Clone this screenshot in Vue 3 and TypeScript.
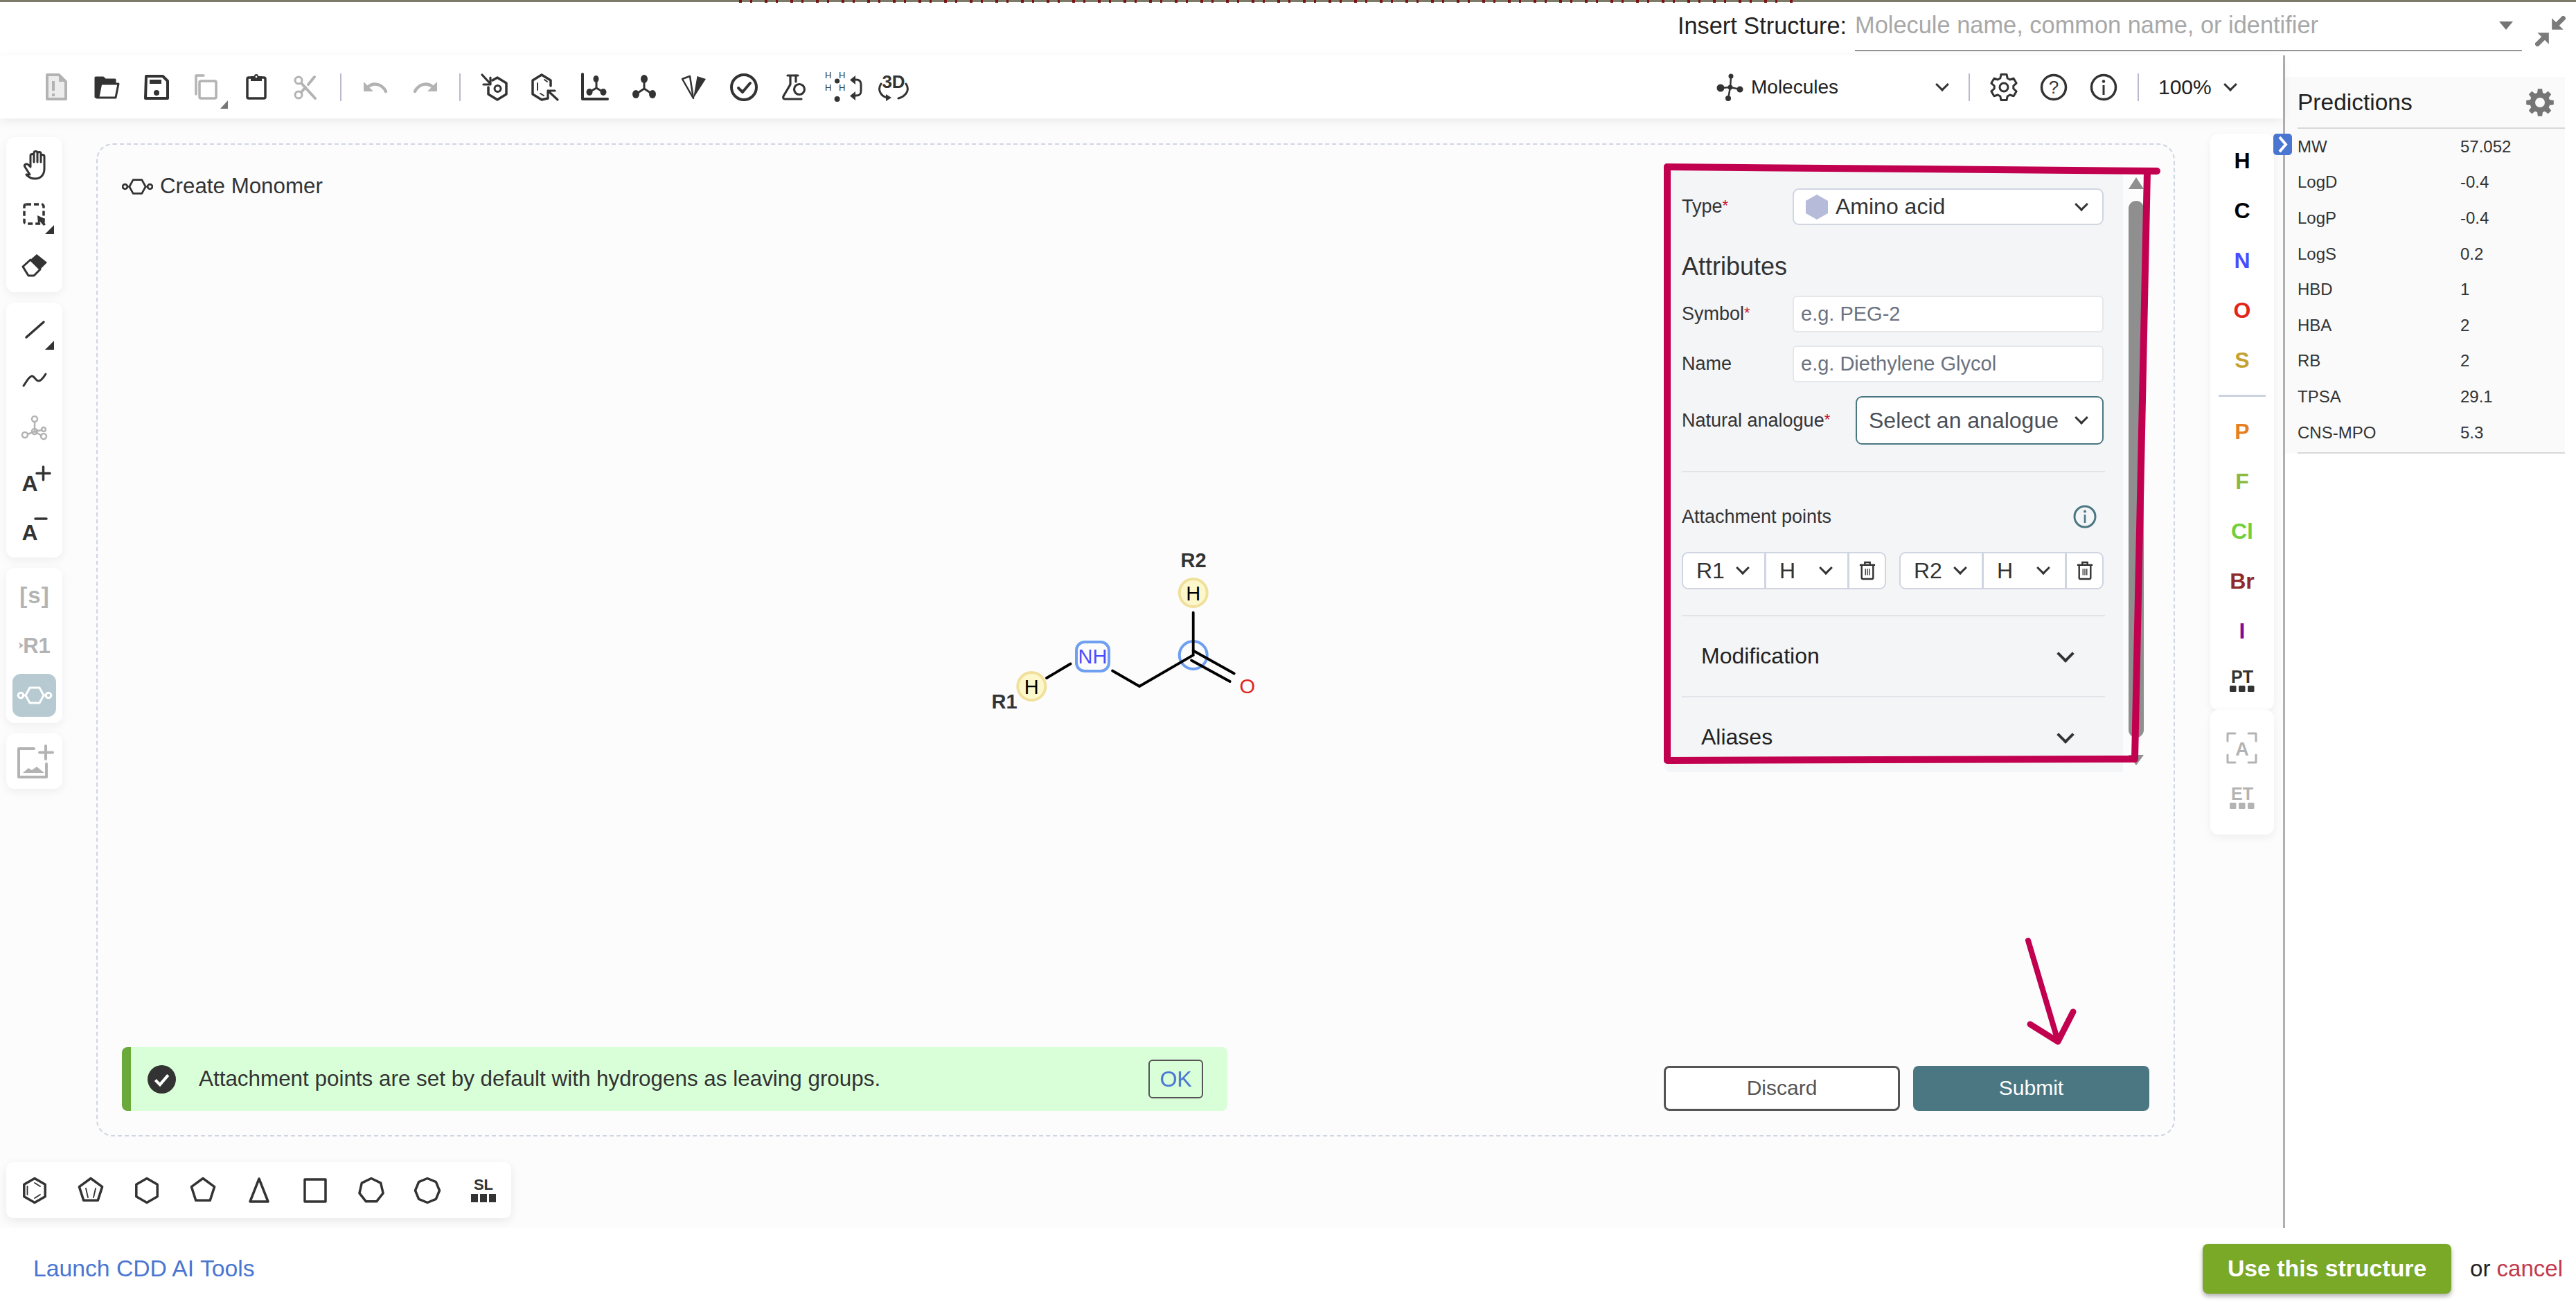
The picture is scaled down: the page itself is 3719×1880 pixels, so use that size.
<script setup lang="ts">
const D = '#333333'
const G = '#b3b3b3'
const F = 'font-family="Liberation Sans, Arial, sans-serif"'

function gear(cx: number, cy: number, R: number, r: number, n: number): string {
  const s = (Math.PI * 2) / n
  const out: string[] = []
  for (let i = 0; i < n; i++) {
    const a = i * s - Math.PI / 2
    const spots: Array<[number, number]> = [
      [r, a - 0.36 * s],
      [R, a - 0.2 * s],
      [R, a + 0.2 * s],
      [r, a + 0.36 * s],
    ]
    for (const [rad, ang] of spots) {
      out.push(`${(cx + rad * Math.cos(ang)).toFixed(1)} ${(cy + rad * Math.sin(ang)).toFixed(1)}`)
    }
  }
  return 'M' + out.join('L') + 'Z'
}

function ngon(n: number, cx = 20, cy = 20, r = 17.5): string {
  const pts: string[] = []
  for (let i = 0; i < n; i++) {
    const a = (i * 2 * Math.PI) / n - Math.PI / 2
    pts.push(`${(cx + r * Math.cos(a)).toFixed(1)},${(cy + r * Math.sin(a)).toFixed(1)}`)
  }
  return pts.join(' ')
}

const line = (c: string, w: number) =>
  `fill="none" stroke="${c}" stroke-width="${w}" stroke-linecap="round" stroke-linejoin="round"`

const fileIcons = [
  `<path d="M6 2h17l10 10v25H6z" fill="#ececec" ${line(G, 4)}/><path d="M23 2v10h10z" fill="${G}"/><rect x="13" y="11" width="4" height="14" fill="${G}"/><rect x="13" y="29" width="4" height="4" fill="${G}"/>`,
  `<path d="M4 6h11l3 3h14v5H12L8 34H4z" fill="${D}" ${`stroke="${D}" stroke-width="3" stroke-linejoin="round"`}/><path d="M11 15h26l-4 20H6z" ${line(D, 3)}/>`,
  `<path d="M5 4h24l7 7v25H4z" ${line(D, 4)}/><rect x="10" y="9" width="17" height="6" fill="${D}"/><circle cx="20" cy="28" r="4" fill="${D}"/>`,
  `<path d="M16 3H5v27" ${line(G, 3.5)}/><rect x="10" y="11" width="24" height="25" rx="2" ${line(G, 3.5)}/><path d="M40 51h11V39z" fill="#777777"/>`,
  `<rect x="7" y="6" width="26" height="30" rx="2" ${line(D, 3.5)}/><path d="M12 4h5a3 3 0 0 1 6 0h5v7H12z" fill="${D}"/><circle cx="20" cy="5" r="1.4" fill="#fff"/>`,
  `<circle cx="9" cy="10" r="5" ${line(G, 3)}/><circle cx="9" cy="31" r="5" ${line(G, 3)}/><path d="M13 14l20 22M13 27l6-7M23 16l9-11" ${line(G, 4)}/>`,
]

const historyIcons = [
  `<path d="M3 12v14h14z" fill="${G}"/><path d="M9 20c7-7 20-6 26 6" ${line(G, 4.5)}/>`,
  `<path d="M37 12v14H23z" fill="${G}"/><path d="M31 20C24 13 11 14 5 26" ${line(G, 4.5)}/>`,
]

const chemIcons = [
  `<path d="M2 2l12 13M4 16h10V6" ${line(D, 3.2)}/><path d="M17 10l7-4 13 8v16l-13 8-13-8V20" ${line(D, 3.5)}/><circle cx="24.5" cy="22" r="4.5" ${line(D, 3)}/>`,
  `<path d="M16 2l13 8v8M25 36l-9 2-13-8V10l13-8" ${line(D, 3.5)}/><path d="M10 14v10M14 29l5 3M20 9l4 3" ${line(D, 2)}/><path d="M39 38L25 25M25 35V25h10" ${line(D, 3.2)}/>`,
  `<path d="M3 1v36h36" ${line(D, 4)}/><path d="M23 8v13L13 27M23 21l10 6" ${line(D, 3)}/><ellipse cx="22.5" cy="8" rx="4" ry="5" fill="${D}"/><ellipse cx="13" cy="27" rx="4.5" ry="5" fill="${D}"/><ellipse cx="33" cy="27" rx="4.5" ry="5" fill="${D}"/>`,
  `<path d="M20 8v14L8 30M20 22l12 8" ${line(D, 3)}/><ellipse cx="20" cy="8" rx="5" ry="6" fill="${D}"/><ellipse cx="8" cy="30" rx="5" ry="6" fill="${D}"/><ellipse cx="32" cy="30" rx="5" ry="6" fill="${D}"/>`,
  `<path d="M3 8l11-4 5 32z" fill="none" stroke="${D}" stroke-width="2.5" stroke-linejoin="round"/><path d="M24.5 4L37 8 19 36z" fill="${D}"/>`,
  `<circle cx="20" cy="20" r="18" ${line(D, 4)}/><path d="M12 21l6 6 11-13" ${line(D, 4)}/>`,
  `<path d="M11 3h15M15 3v13L5 33c-1 2 0 4 2 4h24" ${line(D, 3.2)}/><path d="M23 3v9" ${line(D, 3.2)}/><circle cx="28" cy="23" r="7.5" ${line(D, 3.2)}/>`,
  `<g ${F} font-size="13" fill="${D}"><text x="-7" y="7">H</text><text x="13" y="7">H</text><text x="-7" y="25">H</text><text x="13" y="25">H</text></g><circle cx="10.6" cy="11" r="3.6" fill="${D}"/><circle cx="10.6" cy="37" r="4" fill="${D}"/><path d="M34 9h4c5 0 7 3 7 7v9c0 5-2 7-7 7h-4" ${line(D, 3)}/><path d="M37 3v13l-8-6.500z" fill="${D}"/><path d="M37 26v13l-8-6.500z" fill="${D}"/>`,
  `<text x="20" y="21" text-anchor="middle" ${F} font-weight="700" font-size="26" fill="${D}">3D</text><path d="M2 15C-4 24 2 33 11 35M38 15c6 9 0 18-11 21" ${line(D, 3)}/><path d="M9 30l8 5-8 5z" fill="${D}"/>`,
]

const molIcon = `<path d="M21 20L22 5M21 20L7 21M21 20l14 3M21 20l-3 16" ${line(D, 2.5)}/><circle cx="22" cy="4" r="3.5" fill="${D}"/><circle cx="7" cy="21" r="5.500" fill="${D}"/><circle cx="21" cy="20" r="3.500" fill="${D}"/><circle cx="35" cy="23" r="4.500" fill="${D}"/><circle cx="18" cy="36" r="4" fill="${D}"/>`

const sysIcons = [
  `<path d="${gear(20, 20, 19, 14, 6)}" ${line(D, 3)}/><circle cx="20" cy="20" r="6" ${line(D, 3)}/>`,
  `<circle cx="20" cy="20" r="17.500" ${line(D, 3.5)}/><text x="20" y="29" text-anchor="middle" ${F} font-size="26" fill="${D}">?</text>`,
  `<circle cx="20" cy="20" r="17.500" ${line(D, 3.5)}/><rect x="18.500" y="17" width="3" height="14" fill="${D}"/><circle cx="20" cy="11.500" r="2.200" fill="${D}"/>`,
]

const monomerShape = (c: string) =>
  `<circle cx="5" cy="15" r="3.800" fill="none" stroke="${c}" stroke-width="3"/><circle cx="45" cy="15" r="3.800" fill="none" stroke="${c}" stroke-width="3"/><path d="M9 15h3l6-11h14l6 11h3M12 15l6 11h14l6-11" ${line(c, 3)}/>`

const arrowCorner = `<path d="M45 58h13V45z" fill="${D}"/>`

const toolGroups = [
  [
    { svg: `<path d="M23 44L16 33c-2-3 2-6 5-3l3 3V17a2.500 2.500 0 0 1 5 0v9V13a2.500 2.500 0 0 1 5 0v13V14a2.500 2.500 0 0 1 5 0v12V18a2.500 2.500 0 0 1 5 0v18c0 9-6 14-13 14-6 0-10-2-13-6z" ${line(D, 3)}/>` },
    { svg: `<rect x="15" y="15" width="28" height="28" rx="3" fill="none" stroke="${D}" stroke-width="3.500" stroke-dasharray="7 4"/><path d="M34 31l11 5-4 2 5 6-3 2-5-6-3 3z" fill="${D}"/>${arrowCorner}` },
    { svg: `<path d="M13 33l11-10 14 14-9 9h-8z" ${line(D, 3)}/><path d="M24 23l9-8 15 12-10 10z" fill="${D}"/>` },
  ],
  [
    { svg: `<path d="M18 40l25-22" ${line(D, 3.500)}/>${arrowCorner}` },
    { svg: `<path d="M14 38C18 33 21 25 26 24c4 0 6 8 10 7 4 0 8-7 10-10" ${line(D, 3)}/>` },
    { svg: `<path d="M30 19v13M30 32l-10 4M30 32l10-2M30 32l10 6" ${line(G, 2.500)}/><circle cx="30" cy="14" r="4" ${line(G, 2.500)}/><circle cx="16" cy="37" r="4" ${line(G, 2.500)}/><circle cx="43" cy="29" r="3" ${line(G, 2.500)}/><circle cx="43" cy="39" r="4" ${line(G, 2.500)}/><circle cx="30" cy="32" r="4" ${line(G, 2.500)}/>` },
    { svg: `<text x="23" y="46" text-anchor="middle" ${F} font-weight="700" font-size="32" fill="${D}">A</text><path d="M42.500 11v19M33 20.500h19" ${line(D, 3.500)}/>` },
    { svg: `<text x="23" y="45" text-anchor="middle" ${F} font-weight="700" font-size="32" fill="${D}">A</text><path d="M31 14h16" ${line(D, 3.500)}/>` },
  ],
  [
    { svg: `<text x="30" y="41" text-anchor="middle" ${F} font-weight="700" font-size="33" fill="${G}" letter-spacing="1">[s]</text>` },
    { svg: `<path d="M7 25l7 5-7 5 2-5z" fill="${G}"/><text x="33" y="41" text-anchor="middle" ${F} font-weight="700" font-size="31" fill="${G}">R1</text>` },
    { active: true, svg: `<g transform="translate(5 15)">${monomerShape('#ffffff')}</g>` },
  ],
  [
    { svg: `<path d="M29 12H7v41h40V34" ${line(G, 4)}/><path d="M46 8v19M37 17.500h19" ${line(G, 4)}/><path d="M13 47l8-7 5 3 7-5 11 9z" fill="${G}"/>` },
  ],
]

const atoms = [
  { s: 'H', c: '#000000' },
  { s: 'C', c: '#000000' },
  { s: 'N', c: '#4a4dff' },
  { s: 'O', c: '#e3241a' },
  { s: 'S', c: '#c4a230' },
]
const atoms2 = [
  { s: 'P', c: '#e57f1f' },
  { s: 'F', c: '#8ab93d' },
  { s: 'Cl', c: '#70cf3a' },
  { s: 'Br', c: '#8e2a2a' },
  { s: 'I', c: '#7a0e9c' },
]

const squares = (c: string) =>
  `<rect x="12" y="37" width="9.500" height="9" rx="1.500" fill="${c}"/><rect x="25" y="37" width="9.500" height="9" rx="1.500" fill="${c}"/><rect x="38" y="37" width="9.500" height="9" rx="1.500" fill="${c}"/>`
const ptIcon = `<text x="30" y="33" text-anchor="middle" ${F} font-weight="700" font-size="25" fill="${D}">PT</text>${squares(D)}`
const frameIcon = `<path d="M9 20V9h11M39 9h11v11M50 40v11H39M20 51H9V40" ${line(G, 3)}/><text x="30" y="41" text-anchor="middle" ${F} font-size="27" fill="${G}">A</text>`
const etIcon = `<text x="30" y="33" text-anchor="middle" ${F} font-weight="700" font-size="25" fill="${G}">ET</text>${squares(G)}`

const templateIcons = [
  `<polygon points="${ngon(6)}" ${line(D, 3.500)}/><path d="M9.500 14v12M20 9l8 5M20 31l8-5" ${line(D, 1.800)}/>`,
  `<polygon points="${ngon(5)}" ${line(D, 3.500)}/><path d="M13 17l3 13M27 17l-3 13" ${line(D, 1.800)}/>`,
  `<polygon points="${ngon(6)}" ${line(D, 3.500)}/>`,
  `<polygon points="${ngon(5)}" ${line(D, 3.500)}/>`,
  `<polygon points="20,3 33,36 7,36" ${line(D, 3.500)}/>`,
  `<rect x="5" y="4" width="30" height="32" ${line(D, 3.500)}/>`,
  `<polygon points="${ngon(7)}" ${line(D, 3.500)}/>`,
  `<polygon points="${ngon(8)}" ${line(D, 3.500)}/>`,
  `<text x="20" y="19" text-anchor="middle" ${F} font-weight="700" font-size="22" fill="${D}">SL</text><rect x="2" y="25" width="10" height="12" fill="${D}"/><rect x="15" y="25" width="10" height="12" fill="${D}"/><rect x="28" y="25" width="10" height="12" fill="${D}"/>`,
]

const predictions = [
  ['MW', '57.052'],
  ['LogD', '-0.4'],
  ['LogP', '-0.4'],
  ['LogS', '0.2'],
  ['HBD', '1'],
  ['HBA', '2'],
  ['RB', '2'],
  ['TPSA', '29.1'],
  ['CNS-MPO', '5.3'],
]

const attachments = ['R1', 'R2']
const bigGear = gear(20, 20, 20, 14.5, 8)
</script>

<template>
  <div class="page">
    <div class="strip"><div class="strip-marks"></div></div>

    <header class="header">
      <div class="insert-label">Insert Structure:</div>
      <div class="insert-box">
        <span class="insert-ph">Molecule name, common name, or identifier</span>
        <span class="insert-caret"></span>
      </div>
      <svg class="compress" viewBox="0 0 40 40">
        <path d="M22 3v15h15z" fill="#7b7b7b" />
        <path d="M18 37V22H3z" fill="#7b7b7b" />
        <path d="M28 12L39 1M12 28L1 39" stroke="#7b7b7b" stroke-width="6" />
      </svg>
    </header>

    <div class="body">
      <main class="work">
        <div class="toolbar">
          <div class="tb-group">
            <svg v-for="(ic, i) in fileIcons" :key="'f' + i" class="tb-icon" viewBox="0 0 40 40" v-html="ic"></svg>
            <span class="tb-sep"></span>
            <svg v-for="(ic, i) in historyIcons" :key="'h' + i" class="tb-icon" viewBox="0 0 40 40" v-html="ic"></svg>
            <span class="tb-sep"></span>
            <svg v-for="(ic, i) in chemIcons" :key="'c' + i" class="tb-icon" viewBox="0 0 40 40" v-html="ic"></svg>
          </div>
          <div class="tb-right">
            <div class="mol-select">
              <svg class="mol-icon" viewBox="0 0 40 40" v-html="molIcon"></svg>
              <span class="mol-text">Molecules</span>
              <span class="chev mol-chev"></span>
            </div>
            <span class="tb-sep"></span>
            <svg v-for="(ic, i) in sysIcons" :key="'s' + i" class="tb-icon" viewBox="0 0 40 40" v-html="ic"></svg>
            <span class="tb-sep"></span>
            <div class="zoom-select"><span>100%</span><span class="chev"></span></div>
          </div>
        </div>

        <div class="stage">
          <div class="tools">
            <div v-for="(group, gi) in toolGroups" :key="gi" class="tool-panel">
              <div v-for="(t, ti) in group" :key="ti" class="tool" :class="{ 'tool-active': t.active }">
                <svg class="tool-icon" viewBox="0 0 60 60" v-html="t.svg"></svg>
              </div>
            </div>
          </div>

          <section class="canvas">
            <div class="canvas-left">
              <div class="title">
                <svg class="title-icon" viewBox="0 0 50 30" v-html="monomerShape('#333333')"></svg>
                <span>Create Monomer</span>
              </div>
              <div class="banner">
                <svg class="banner-check" viewBox="0 0 40 40">
                  <circle cx="20" cy="20" r="20" fill="#333333" />
                  <path d="M11 21l6.500 6.500L29 14" fill="none" stroke="#fff" stroke-width="4" />
                </svg>
                <span class="banner-text">Attachment points are set by default with hydrogens as leaving groups.</span>
                <span class="banner-ok">OK</span>
              </div>
            </div>

            <svg class="molecule" viewBox="1400 780 440 260">
              <g fill="#fcf8cc" stroke="#f1e09b" stroke-width="4">
                <circle cx="1489.300" cy="991" r="20" />
                <circle cx="1722.700" cy="856" r="20" />
              </g>
              <rect x="1554" y="927" width="47" height="42" rx="12" fill="none" stroke="#6e9ff0" stroke-width="4" />
              <circle cx="1722.700" cy="946" r="20" fill="none" stroke="#6e9ff0" stroke-width="4" />
              <g stroke="#000" stroke-width="3.800" fill="none" stroke-linecap="round">
                <path d="M1511 979l34.500-20.500" />
                <path d="M1606 968.500L1645 991l77.700-45V884.500" />
                <path d="M1722.700 939.500l59 33" />
                <path d="M1720 953.500l55.700 30.500" />
              </g>
              <g class="mol-labels">
                <text x="1489.300" y="1001.500" fill="#000">H</text>
                <text x="1722.700" y="866.500" fill="#000">H</text>
                <text x="1577.500" y="958" fill="#4a4dff">NH</text>
                <text x="1800.700" y="1001" fill="#e3241a">O</text>
                <text class="r-label" x="1450" y="1023">R1</text>
                <text class="r-label" x="1723" y="819">R2</text>
              </g>
            </svg>

            <div class="canvas-right">
              <div class="form-panel">
                <div class="form-scroll">
                  <div class="row row-type">
                    <label class="lbl">Type<span class="req">*</span></label>
                    <div class="select type-select">
                      <svg class="hex" viewBox="0 0 32 36"><polygon points="16,0 32,9 32,27 16,36 0,27 0,9" fill="#b5bbd9" /></svg>
                      <span class="select-text">Amino acid</span>
                      <span class="chev"></span>
                    </div>
                  </div>
                  <h3 class="attr-title">Attributes</h3>
                  <div class="row row-symbol">
                    <label class="lbl">Symbol<span class="req">*</span></label>
                    <div class="input">e.g. PEG-2</div>
                  </div>
                  <div class="row row-name">
                    <label class="lbl">Name</label>
                    <div class="input">e.g. Diethylene Glycol</div>
                  </div>
                  <div class="row row-analogue">
                    <label class="lbl">Natural analogue<span class="req">*</span></label>
                    <div class="select analogue-select">
                      <span class="select-text">Select an analogue</span>
                      <span class="chev"></span>
                    </div>
                  </div>
                  <div class="divider divider-a"></div>
                  <div class="attach-head">
                    <span class="lbl">Attachment points</span>
                    <svg class="attach-info" viewBox="0 0 34 34">
                      <circle cx="17" cy="17" r="15" fill="none" stroke="#4b7783" stroke-width="3" />
                      <rect x="15.700" y="14" width="2.600" height="12" fill="#4b7783" />
                      <circle cx="17" cy="9.500" r="2" fill="#4b7783" />
                    </svg>
                  </div>
                  <div class="attach-row">
                    <div v-for="a in attachments" :key="a" class="attach-group">
                      <div class="attach-cell"><span>{{ a }}</span><span class="chev"></span></div>
                      <div class="attach-cell"><span>H</span><span class="chev"></span></div>
                      <div class="attach-trash">
                        <svg viewBox="0 0 26 30" class="trash">
                          <path d="M1 6h24M9 5V2h8v3M4 7v19a2 2 0 0 0 2 2h14a2 2 0 0 0 2-2V7" fill="none" stroke="#333" stroke-width="2.600" />
                          <path d="M10 12v10M16 12v10M13 12v10" stroke="#333" stroke-width="1.500" />
                        </svg>
                      </div>
                    </div>
                  </div>
                  <div class="divider divider-b"></div>
                  <div class="accordion"><span>Modification</span><span class="chev chev-lg"></span></div>
                  <div class="divider"></div>
                  <div class="accordion"><span>Aliases</span><span class="chev chev-lg"></span></div>
                </div>
                <div class="scrollbar">
                  <span class="sb-up"></span>
                  <span class="sb-thumb"></span>
                  <span class="sb-down"></span>
                </div>
              </div>
              <div class="actions">
                <button class="btn btn-discard" type="button">Discard</button>
                <button class="btn btn-submit" type="button">Submit</button>
              </div>
            </div>
          </section>

          <div class="atoms">
            <div class="atom-panel atom-main">
              <div v-for="a in atoms" :key="a.s" class="atom" :style="{ color: a.c }">{{ a.s }}</div>
              <div class="atom-sep-wrap"><span class="atom-sep"></span></div>
              <div v-for="a in atoms2" :key="a.s" class="atom" :style="{ color: a.c }">{{ a.s }}</div>
              <div class="atom"><svg class="tool-icon" viewBox="0 0 60 60" v-html="ptIcon"></svg></div>
            </div>
            <div class="atom-panel atom-extra">
              <div class="atom"><svg class="tool-icon" viewBox="0 0 60 60" v-html="frameIcon"></svg></div>
              <div class="atom"><svg class="tool-icon" viewBox="0 0 60 60" v-html="etIcon"></svg></div>
            </div>
          </div>
        </div>

        <div class="templates">
          <div v-for="(ic, i) in templateIcons" :key="i" class="template">
            <svg class="template-icon" viewBox="0 0 40 40" v-html="ic"></svg>
          </div>
        </div>
      </main>

      <aside class="side">
        <span class="side-tab">
          <svg viewBox="0 0 27 31" class="side-tab-icon"><path d="M9 5l9 10.500L9 26" fill="none" stroke="#fff" stroke-width="4" /></svg>
        </span>
        <div class="pred">
          <div class="pred-head">
            <span class="pred-title">Predictions</span>
            <svg class="pred-gear" viewBox="0 0 40 40">
              <path :d="bigGear" fill="#757575" />
              <circle cx="20" cy="20" r="7" fill="#fafafa" />
            </svg>
          </div>
          <div class="pred-rows">
            <div v-for="p in predictions" :key="p[0]" class="pred-row">
              <span class="pred-key">{{ p[0] }}</span>
              <span>{{ p[1] }}</span>
            </div>
          </div>
        </div>
      </aside>
    </div>

    <footer class="footer">
      <a class="launch">Launch CDD AI Tools</a>
      <div class="footer-right">
        <button class="use-btn" type="button">Use this structure</button>
        <span class="or">or <a class="cancel">cancel</a></span>
      </div>
    </footer>

    <svg class="annotation" viewBox="0 0 3719 1880">
      <g fill="none" stroke="#c1004f" stroke-linecap="round" stroke-linejoin="round">
        <path stroke-width="10" d="M2407 241L3114 247" />
        <path stroke-width="10" d="M2407 241V1098L3082 1096L3100 248" />
        <path stroke-width="8" d="M2928 1358L2971 1503" />
        <path stroke-width="9" d="M2993 1461L2971 1504L2931 1479" />
      </g>
    </svg>
  </div>
</template>

<style>
html,
body {
  margin: 0;
  background: #ffffff;
}
</style>

<style scoped>
.page {
  position: relative;
  width: 3719px;
  height: 1880px;
  overflow: hidden;
  background: #fff;
  font-family: "Liberation Sans", Arial, sans-serif;
  color: #333;
}
.strip {
  height: 3px;
  padding-left: 1067px;
  background: #7b7b68;
}
.strip-marks {
  width: 1530px;
  height: 4px;
  background: repeating-linear-gradient(90deg, #7a1414 0 4px, transparent 4px 16px, #7a1414 16px 19px, transparent 19px 37px);
}
.header {
  height: 77px;
  box-sizing: border-box;
  padding: 10px 0 0 2422px;
  display: flex;
  align-items: flex-start;
}
.insert-label {
  width: 256px;
  font-size: 34.300px;
  line-height: 48px;
  color: #222;
  flex: none;
}
.insert-box {
  width: 963px;
  height: 61px;
  box-sizing: border-box;
  border-bottom: 2px solid #949494;
  display: flex;
  justify-content: space-between;
  flex: none;
}
.insert-ph {
  font-size: 34.400px;
  line-height: 46px;
  color: #a8a8a8;
}
.insert-caret {
  width: 0;
  height: 0;
  margin: 18px 13px 0 0;
  border-left: 10px solid transparent;
  border-right: 10px solid transparent;
  border-top: 12px solid #757575;
}
.compress {
  width: 44px;
  height: 44px;
  margin: 10px 0 0 19px;
  flex: none;
}
.body {
  display: flex;
  height: 1693px;
}
.work {
  width: 3296px;
  flex: none;
  display: flex;
  flex-direction: column;
  background: #fcfcfc;
}
.toolbar {
  position: relative;
  z-index: 1;
  height: 91px;
  flex: none;
  background: #fff;
  box-shadow: 0 4px 14px rgba(0, 0, 0, 0.07);
  display: flex;
  align-items: center;
  justify-content: space-between;
  padding: 0 2px 0 46px;
}
.tb-group,
.tb-right {
  display: flex;
  align-items: center;
}
.tb-icon {
  width: 40px;
  height: 40px;
  padding: 0 16px;
  overflow: visible;
  flex: none;
}
.tb-sep {
  width: 28px;
  height: 40px;
  flex: none;
  background: linear-gradient(#b9b9d0, #b9b9d0) center / 2px 100% no-repeat;
}
.mol-select {
  width: 354px;
  display: flex;
  align-items: center;
  flex: none;
}
.mol-icon {
  width: 40px;
  height: 40px;
  margin: 0 11px 0 2px;
}
.mol-text {
  font-size: 28px;
  color: #222;
}
.mol-chev {
  margin-left: auto;
  margin-right: 18px;
}
.zoom-select {
  width: 193px;
  box-sizing: border-box;
  padding-left: 15px;
  display: flex;
  align-items: center;
  gap: 20px;
  font-size: 30px;
  color: #222;
}
.chev {
  display: inline-block;
  width: 14px;
  height: 14px;
  box-sizing: border-box;
  border-right: 3px solid #333;
  border-bottom: 3px solid #333;
  transform: translateY(-4px) rotate(45deg);
  flex: none;
}
.chev-lg {
  width: 18px;
  height: 18px;
  border-width: 4px;
}
.stage {
  height: 1507px;
  flex: none;
  display: flex;
  align-items: flex-start;
  padding-left: 9px;
}
.tools {
  width: 81px;
  margin-top: 27px;
  display: flex;
  flex-direction: column;
  gap: 15px;
  flex: none;
}
.tool-panel {
  padding: 4px 0;
  background: #fff;
  border-radius: 12px;
  box-shadow: 0 4px 14px rgba(0, 0, 0, 0.06);
}
.tool {
  height: 72px;
  display: flex;
  align-items: center;
  justify-content: center;
}
.tool-active {
  height: 62px;
  margin: 5px 9px 5px 9px;
  border-radius: 12px;
  background: #b7cad1;
}
.tool-icon {
  width: 60px;
  height: 60px;
  flex: none;
  overflow: visible;
}
.canvas {
  position: relative;
  width: 3001px;
  height: 1434px;
  box-sizing: border-box;
  margin: 36px 0 0 49px;
  border: 2px dashed #cfd5e3;
  border-radius: 24px;
  display: flex;
  justify-content: space-between;
  flex: none;
}
.canvas-left {
  display: flex;
  flex-direction: column;
  padding: 0 0 35px 35px;
  width: 1596px;
}
.title {
  display: flex;
  align-items: center;
  gap: 10px;
  margin-top: 42px;
  height: 36px;
  font-size: 31.300px;
}
.title-icon {
  width: 45px;
  height: 27px;
}
.banner {
  margin-top: auto;
  height: 92px;
  box-sizing: border-box;
  border-left: 13px solid #6aaa3a;
  border-radius: 8px;
  background: #d9ffd9;
  display: flex;
  align-items: center;
  padding: 0 35px 0 24px;
}
.banner-check {
  width: 41px;
  height: 41px;
  flex: none;
}
.banner-text {
  margin-left: 33px;
  font-size: 31.400px;
  white-space: nowrap;
}
.banner-ok {
  margin-left: auto;
  width: 79px;
  height: 56px;
  box-sizing: border-box;
  border: 2px solid #555;
  border-radius: 6px;
  color: #4a76d1;
  font-size: 32px;
  line-height: 52px;
  text-align: center;
}
.molecule {
  position: absolute;
  left: 1259px;
  top: 571px;
  width: 440px;
  height: 260px;
}
.mol-labels text {
  font-size: 29px;
  text-anchor: middle;
}
.mol-labels .r-label {
  font-weight: 700;
  fill: #333;
}
.canvas-right {
  width: 701px;
  margin-right: 35px;
  padding-bottom: 35px;
  display: flex;
  flex-direction: column;
  justify-content: space-between;
  flex: none;
}
.form-panel {
  margin-top: 36px;
  height: 870px;
  display: flex;
}
.form-scroll {
  width: 663px;
  box-sizing: border-box;
  padding: 27px 28px 0 26px;
  background: #f4f5f7;
  border-radius: 12px 0 0 12px;
  overflow: hidden;
  flex: none;
}
.row {
  display: flex;
  align-items: center;
  justify-content: space-between;
}
.lbl {
  font-size: 27px;
  color: #333;
}
.req {
  color: #c8102e;
  font-size: 22px;
  vertical-align: 3px;
}
.select {
  box-sizing: border-box;
  background: #fff;
  display: flex;
  align-items: center;
  justify-content: space-between;
}
.type-select {
  width: 449px;
  height: 53px;
  border: 2px solid #d0d5e2;
  border-radius: 9px;
  padding: 0 23px 0 17px;
}
.hex {
  width: 32px;
  height: 36px;
  flex: none;
}
.select-text {
  font-size: 32px;
  color: #333;
}
.type-select .select-text {
  margin: 0 auto 0 11px;
}
.attr-title {
  margin: 38px 0 0;
  font-size: 36px;
  line-height: 44px;
  font-weight: 400;
  color: #333;
}
.row-symbol {
  margin-top: 20px;
}
.row-name {
  margin-top: 19px;
}
.row-analogue {
  margin-top: 20px;
}
.input {
  width: 449px;
  height: 53px;
  box-sizing: border-box;
  border: 2px solid #e5e7eb;
  border-radius: 6px;
  background: #fff;
  padding-left: 10px;
  font-size: 29px;
  line-height: 49px;
  color: #6b7280;
}
.analogue-select {
  width: 358px;
  height: 70px;
  border: 2px solid #4b7783;
  border-radius: 9px;
  padding: 0 23px 0 17px;
}
.analogue-select .select-text {
  color: #4a4f57;
}
.divider {
  height: 2px;
  margin-right: -2px;
  background: #e2e4ea;
}
.divider-a {
  margin-top: 38px;
}
.attach-head {
  margin-top: 44px;
  height: 40px;
  display: flex;
  align-items: center;
  justify-content: space-between;
  padding-right: 10px;
}
.attach-info {
  width: 34px;
  height: 34px;
}
.attach-row {
  margin-top: 31px;
  display: flex;
  justify-content: space-between;
}
.attach-group {
  width: 295px;
  height: 54px;
  box-sizing: border-box;
  border: 2px solid #d0d5e2;
  border-radius: 9px;
  background: #fff;
  display: flex;
}
.attach-cell {
  width: 120px;
  box-sizing: border-box;
  border-right: 3px solid #d0d5e2;
  padding: 0 24px 0 19px;
  display: flex;
  align-items: center;
  justify-content: space-between;
  font-size: 32px;
  flex: none;
}
.attach-trash {
  flex: 1;
  display: flex;
  align-items: center;
  justify-content: center;
}
.trash {
  width: 24px;
  height: 28px;
}
.divider-b {
  margin-top: 37px;
}
.accordion {
  height: 115px;
  box-sizing: border-box;
  padding: 0 46px 0 28px;
  display: flex;
  align-items: center;
  justify-content: space-between;
  font-size: 32px;
  color: #222;
}
.scrollbar {
  width: 38px;
  position: relative;
  flex: none;
}
.sb-up {
  position: absolute;
  top: 11px;
  left: 8px;
  width: 0;
  height: 0;
  border-left: 11px solid transparent;
  border-right: 11px solid transparent;
  border-bottom: 17px solid #8f8f8f;
}
.sb-thumb {
  position: absolute;
  top: 45px;
  left: 8px;
  width: 22px;
  height: 775px;
  border-radius: 11px;
  background: #8f8f8f;
}
.sb-down {
  position: absolute;
  top: 845px;
  left: 8px;
  width: 0;
  height: 0;
  border-left: 11px solid transparent;
  border-right: 11px solid transparent;
  border-top: 15px solid #8f8f8f;
}
.actions {
  display: flex;
  gap: 19px;
}
.btn {
  width: 341px;
  height: 65px;
  box-sizing: border-box;
  border-radius: 8px;
  padding-bottom: 3px;
  font-family: inherit;
  font-size: 30px;
  flex: none;
}
.btn-discard {
  border: 3px solid #555;
  background: #fff;
  color: #555;
}
.btn-submit {
  border: none;
  background: #4b7783;
  color: #fff;
}
.atoms {
  width: 92px;
  margin: 22px 0 0 51px;
  flex: none;
}
.atom-panel {
  background: #fff;
  border-radius: 12px;
  box-shadow: 0 4px 14px rgba(0, 0, 0, 0.06);
}
.atom-main {
  padding: 3px 0 6px;
}
.atom-extra {
  padding: 19px 0 17px;
}
.atom {
  height: 72px;
  display: flex;
  align-items: center;
  justify-content: center;
  font-size: 32px;
  font-weight: 700;
}
.atom-sep-wrap {
  height: 31px;
  display: flex;
  align-items: center;
  justify-content: center;
}
.atom-sep {
  width: 68px;
  height: 3px;
  background: #cdd3de;
}
.templates {
  width: 729px;
  height: 81px;
  margin: 0 0 0 9px;
  background: #fff;
  border-radius: 10px;
  box-shadow: 0 4px 14px rgba(0, 0, 0, 0.08);
  display: flex;
  flex: none;
}
.template {
  width: 81px;
  display: flex;
  align-items: center;
  justify-content: center;
}
.template-icon {
  width: 40px;
  height: 40px;
}
.side {
  position: relative;
  flex: 1;
  border-left: 3px solid #b0b0b0;
}
.side-tab {
  position: absolute;
  left: -17px;
  top: 113px;
  width: 27px;
  height: 31px;
  border-radius: 5px;
  background: #4a76d1;
  z-index: 2;
}
.side-tab-icon {
  width: 27px;
  height: 31px;
  display: block;
}
.pred {
  margin: 31px 16px 0 0;
  background: #fafafa;
  box-sizing: border-box;
  padding: 0 0 0 18px;
}
.pred-head {
  height: 75px;
  box-sizing: border-box;
  border-bottom: 2px solid #d8d8d8;
  display: flex;
  align-items: center;
  justify-content: space-between;
  padding-right: 16px;
}
.pred-title {
  font-size: 33.500px;
  color: #222;
}
.pred-gear {
  width: 40px;
  height: 40px;
}
.pred-rows {
  padding-bottom: 3px;
  border-bottom: 2px solid #d8d8d8;
}
.pred-row {
  height: 51.600px;
  display: flex;
  align-items: center;
  font-size: 24px;
  color: #333;
}
.pred-key {
  width: 235px;
}
.footer {
  height: 107px;
  box-sizing: border-box;
  padding: 10px 19px 0 48px;
  display: flex;
  align-items: center;
  justify-content: space-between;
  background: #fff;
}
.launch {
  font-size: 33.700px;
  color: #4a76d1;
}
.footer-right {
  display: flex;
  align-items: center;
  gap: 27px;
}
.use-btn {
  width: 359px;
  height: 72px;
  border: none;
  border-radius: 8px;
  background: #7aa827;
  box-shadow: 0 4px 6px rgba(0, 0, 0, 0.3);
  color: #fff;
  font-family: inherit;
  font-size: 33.800px;
  font-weight: 700;
}
.or {
  font-size: 33px;
  color: #222;
}
.cancel {
  color: #c23a4c;
}
.annotation {
  position: absolute;
  left: 0;
  top: 0;
  width: 3719px;
  height: 1880px;
  z-index: 5;
  pointer-events: none;
}
</style>
